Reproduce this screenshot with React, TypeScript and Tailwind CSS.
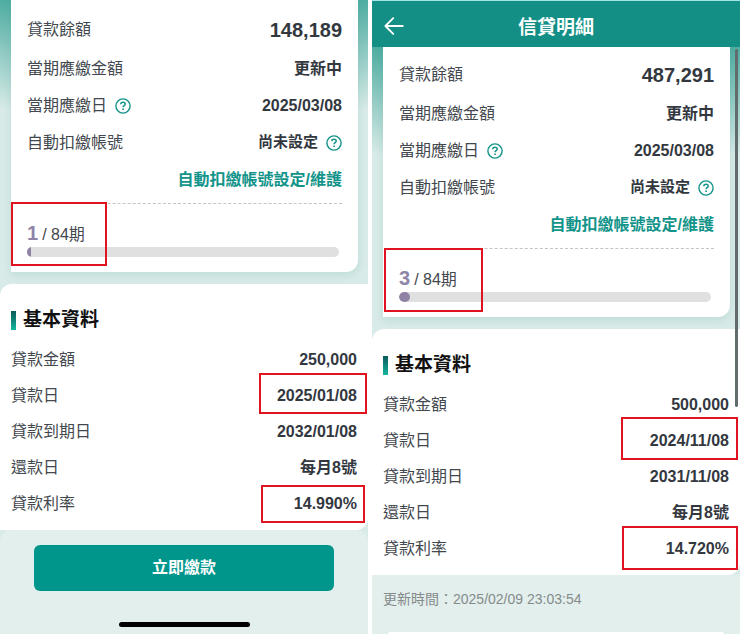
import type { ReactNode } from 'react';

type InfoItem = { label: string; value: string; mark?: string };

type Loan = {
  balance: string;
  dueDate: string;
  paid: number;
  total: number;
  countMark: string;
  info: InfoItem[];
};

const firstLoan: Loan = {
  balance: '148,189',
  dueDate: '2025/03/08',
  paid: 1,
  total: 84,
  countMark: '-top-0.5 -left-4 h-16 w-24',
  info: [
    { label: '貸款金額', value: '250,000' },
    { label: '貸款日', value: '2025/01/08', mark: '-top-[5px] -right-[10px] h-[41px] w-[108px]' },
    { label: '貸款到期日', value: '2032/01/08' },
    { label: '還款日', value: '每月8號' },
    { label: '貸款利率', value: '14.990%', mark: '-top-px -right-2 h-[38px] w-[104px]' },
  ],
};

const secondLoan: Loan = {
  balance: '487,291',
  dueDate: '2025/03/08',
  paid: 3,
  total: 84,
  countMark: '-top-px -left-[15px] h-16 w-[99px]',
  info: [
    { label: '貸款金額', value: '500,000' },
    { label: '貸款日', value: '2024/11/08', mark: '-top-1.5 -right-[9px] h-[43px] w-[117px]' },
    { label: '貸款到期日', value: '2031/11/08' },
    { label: '還款日', value: '每月8號' },
    { label: '貸款利率', value: '14.720%', mark: '-top-[5px] -right-[9px] h-11 w-[116px]' },
  ],
};

function RedBox({ className }: { className: string }) {
  return <span aria-hidden="true" className={`pointer-events-none absolute border-2 border-[#e0141e] ${className}`} />;
}

function HelpButton() {
  return (
    <button type="button" aria-label="說明" className="text-[#12948a]">
      <svg width="16" height="16" viewBox="0 0 16 16" fill="none" stroke="currentColor">
        <circle cx="8" cy="8" r="7.1" strokeWidth="1.4" />
        <path d="M5.8 6.3C5.8 5 6.7 4.2 8 4.2s2.2.8 2.2 1.9c0 1.6-2.1 1.6-2.1 3.2" strokeWidth="1.5" />
        <path d="M7.3 10.4h1.6V12H7.3z" fill="currentColor" stroke="none" />
      </svg>
    </button>
  );
}

function SummaryRow({ label, help, children }: { label: string; help?: boolean; children: ReactNode }) {
  return (
    <div className="flex h-[37px] items-center justify-between">
      <dt className="flex items-center gap-2">
        {label}
        {help && <HelpButton />}
      </dt>
      <dd className="flex items-center gap-2 font-bold text-[#33383f]">{children}</dd>
    </div>
  );
}

function SummaryCard({ loan, className }: { loan: Loan; className: string }) {
  const { balance, dueDate, paid, total, countMark } = loan;
  const percent = (paid / total) * 100;

  return (
    <section
      className={`mr-[10px] ml-[11px] rounded-br-xl bg-white pr-4 pb-[15px] pl-4 shadow-[0_3px_10px_rgba(20,130,120,0.14)] ${className}`}
    >
      <dl>
        <div className="flex h-10 items-center justify-between">
          <dt>貸款餘額</dt>
          <dd className="text-xl font-bold text-[#33383f]">{balance}</dd>
        </div>
        <SummaryRow label="當期應繳金額">更新中</SummaryRow>
        <SummaryRow label="當期應繳日" help>
          {dueDate}
        </SummaryRow>
        <SummaryRow label="自動扣繳帳號">
          <span className="text-[15px]">尚未設定</span>
          <HelpButton />
        </SummaryRow>
      </dl>
      <div className="flex h-[37px] items-center justify-end">
        <a href="#autopay" className="font-bold text-[#12948a]">
          自動扣繳帳號設定/維護
        </a>
      </div>

      <div className="relative mt-[5px] border-t border-dashed border-[#c4c4c4] pt-4">
        <p className="flex h-[27px] items-baseline gap-1 leading-[27px]">
          <strong className="text-xl leading-[27px] font-bold text-[#8f85a8]">{paid}</strong>
          <span>/ {total}期</span>
        </p>
        <div
          role="progressbar"
          aria-label="還款期數"
          aria-valuenow={paid}
          aria-valuemax={total}
          className="mr-[3px] h-[10px] overflow-hidden rounded-full bg-[#e0e0e0]"
        >
          <div
            className={`h-full bg-[#8f82a4] ${percent > 2 ? 'rounded-full' : ''}`}
            style={{ width: `${percent}%` }}
          />
        </div>
        <RedBox className={countMark} />
      </div>
    </section>
  );
}

function BasicInfo({ items }: { items: InfoItem[] }) {
  return (
    <section className="mt-3 rounded-tl-xl rounded-br-xl bg-white px-[11px] pt-[21px] pb-2">
      <h2 className="flex h-[30px] items-center gap-[7px] text-[19px] font-bold text-[#111]">
        <span className="h-[19px] w-[5px] bg-linear-to-b from-[#0b5a58] to-[#14b8a0]" />
        基本資料
      </h2>
      <dl className="mt-[7px]">
        {items.map((item) => (
          <div key={item.label} className="relative flex h-9 items-center justify-between">
            <dt>{item.label}</dt>
            <dd className="font-bold text-[#33383f]">{item.value}</dd>
            {item.mark && <RedBox className={item.mark} />}
          </div>
        ))}
      </dl>
    </section>
  );
}

export default function App() {
  return (
    <main
      lang="zh-TW"
      className="grid min-h-screen grid-cols-2 gap-1 bg-white font-['Liberation_Sans','Noto_Sans_CJK_TC',sans-serif] text-base text-[#43484e]"
    >
      <div className="flex flex-col bg-[#d9ebe8] bg-[linear-gradient(#4fada2_0px,#d9ebe8_110px)]">
        <SummaryCard loan={firstLoan} className="pt-[10px]" />
        <BasicInfo items={firstLoan.info} />
        <footer className="flex grow flex-col items-center rounded-t-xl bg-[#e3efed] pt-[15px] pb-[7px]">
          <div className="w-full px-[34px]">
            <button type="button" className="h-[46px] w-full rounded-md bg-[#00968c] font-bold text-white">
              立即繳款
            </button>
          </div>
          <div className="mt-auto h-[5px] w-[131px] rounded-full bg-black" />
        </footer>
      </div>

      <div className="relative flex flex-col bg-[#d9ebe8] bg-[linear-gradient(#4fada2_47px,#d9ebe8_155px)]">
        <header className="grid h-[47px] grid-cols-[44px_1fr_44px] items-center border-t border-[#a5e4e4] bg-[#138f86] pt-1 text-white">
          <button type="button" aria-label="返回" className="pl-3">
            <svg width="20" height="18" viewBox="0 0 20 18" fill="none" stroke="currentColor" strokeWidth="1.8" strokeLinecap="round" strokeLinejoin="round">
              <path d="M9.2 1.2 1.4 9l7.8 7.8M1.6 9h17.2" />
            </svg>
          </button>
          <h1 className="pt-1 text-center text-[19px] font-bold">信貸明細</h1>
        </header>
        <SummaryCard loan={secondLoan} className="pt-2" />
        <BasicInfo items={secondLoan.info} />
        <footer className="flex grow flex-col bg-[#e3efed] pt-[14px]">
          <p className="px-[11px] text-sm leading-5 text-[#858b8b]">更新時間：2025/02/09 23:03:54</p>
          <div className="mx-4 mt-auto h-0.5 rounded-t-sm bg-white" />
        </footer>
        {/* scroll thumb */}
        <div className="absolute top-[49px] right-0.5 h-[358px] w-[3px] rounded-full bg-[#626c6c]" />
      </div>
    </main>
  );
}
